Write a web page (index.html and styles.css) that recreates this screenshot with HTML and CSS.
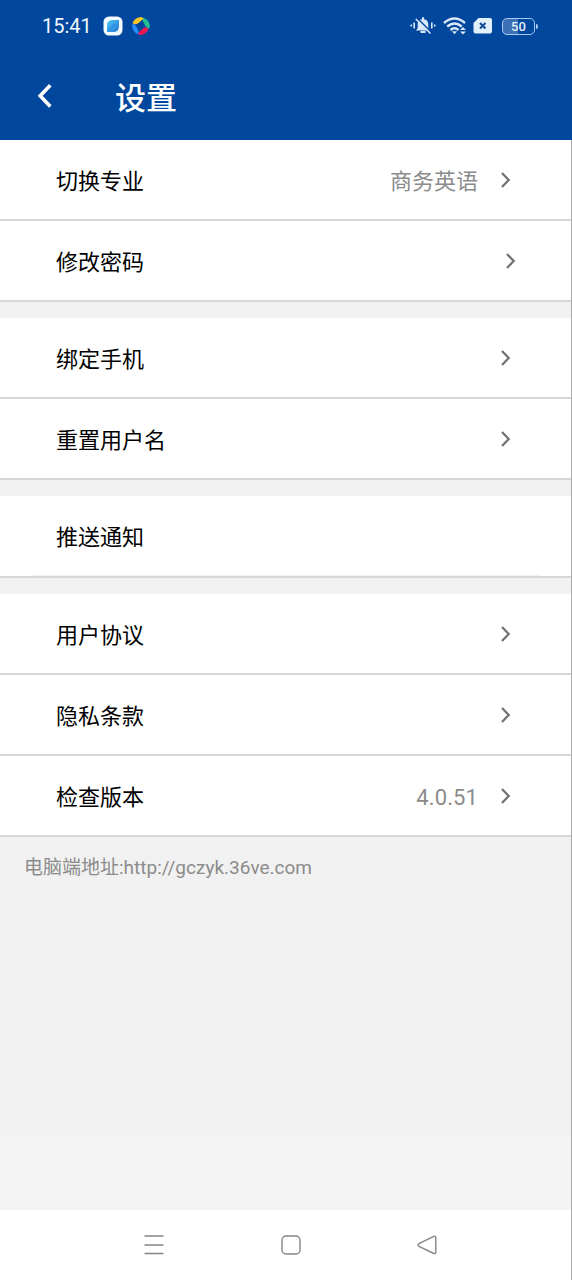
FILE: index.html
```
<!DOCTYPE html>
<html lang="zh-CN">
<head>
<meta charset="utf-8">
<title>设置</title>
<link rel="stylesheet" href="styles.css">
</head>
<body>
<div class="screen">
  <header class="header">
    <div class="status">
      <span class="time">15:41</span>
      <svg class="app-icon" width="20" height="20" viewBox="0 0 20 20">
        <defs><linearGradient id="leaf" x1="0" y1="0" x2="1" y2="1"><stop offset="0" stop-color="#4ccbf5"/><stop offset="1" stop-color="#2472d6"/></linearGradient></defs>
        <rect x="0.5" y="0.5" width="19" height="19" rx="5.5" fill="#f4fbff"/>
        <path d="M4 9.5Q4 4 10 4H16V10Q16 16 10 16H4Z" fill="url(#leaf)"/>
        <path d="M5 15L12 8" stroke="#1e83df" stroke-width="1"/>
      </svg>
      <svg class="app-icon swirl" width="20" height="20" viewBox="0 0 20 20">
        <path d="M1.5 7Q4 1 10.5 1L13 2.5L7.5 7Q4 9.5 1.5 7Z" fill="#f9c52b"/>
        <path d="M12 2Q18.5 3 19 11L17 13Q14 10 12 5.5Z" fill="#20bf92"/>
        <path d="M17.5 13Q15 19 8 19L7 17L12 12.5Q15 10 17.5 13Z" fill="#ef174f"/>
        <path d="M1 8.5L3.5 8Q6 11 7.5 15V18.5Q1 16 1 8.5Z" fill="#268cff"/>
      </svg>
      <div class="indicators">
        <svg width="26" height="20" viewBox="0 0 26 20" fill="none" stroke="#d9e8fa">
          <path d="M6 14.5L7.7 12V8Q8 3.5 13 3Q18 3.5 18.3 8V12L20 14.5Z" fill="#d9e8fa" stroke="none"/>
          <path d="M13 1.2V4M10.5 16H15.5" stroke-width="2"/>
          <path d="M6.5 1.5L21.5 16.5" stroke="#00479d" stroke-width="1.6"/>
          <path d="M5.8 3L20.5 17.5" stroke-width="1.6"/>
          <path d="M4.2 6.5V12.5M1.3 8.5V10.5M21.8 6.5V12.5M24.7 8.5V10.5" stroke-width="1.6"/>
        </svg>
        <svg width="24" height="20" viewBox="0 0 24 20" fill="none" stroke="#d9e8fa" stroke-width="2.4">
          <path d="M1 7Q11.5-2 22 7M4.2 10.5Q11.5 4.5 18.8 10.5M7.5 14Q11.5 10.5 15.5 14"/>
          <path d="M9 15.2H14L11.5 18.3Z" fill="#d9e8fa" stroke="none"/>
          <path d="M17 14L20 11L23 14ZM17 15.5H23L20 18.4Z" fill="#d9e8fa" stroke="none"/>
        </svg>
        <svg class="sim" width="20" height="18" viewBox="0 0 20 18">
          <path d="M5.5 1H17Q19 1 19 3V14.5Q19 16.5 17 16.5H2.5Q.5 16.5 .5 14.5V6Z" fill="#e2f0fc"/>
          <path d="M7 6L12.5 11.5M12.5 6L7 11.5" stroke="#124d94" stroke-width="2.1"/>
        </svg>
        <div class="battery">50</div>
      </div>
    </div>
    <div class="titlebar">
      <svg class="back" width="16" height="26" viewBox="0 0 16 26"><path d="M13.3 2.2L3.2 12.8L13.3 23.4" fill="none" stroke="#fff" stroke-width="3.6"/></svg>
      <h1 class="title">设置</h1>
    </div>
  </header>
  <main class="content">
    <section class="group">
      <div class="row"><span class="label">切换专业</span><span class="value">商务英语</span><svg class="chevron" viewBox="0 0 10 18"><path d="M1 2L7.7 9L1 16"/></svg></div>
      <div class="row wide"><span class="label">修改密码</span><svg class="chevron" viewBox="0 0 10 18"><path d="M1 2L7.7 9L1 16"/></svg></div>
    </section>
    <section class="group">
      <div class="row"><span class="label">绑定手机</span><svg class="chevron" viewBox="0 0 10 18"><path d="M1 2L7.7 9L1 16"/></svg></div>
      <div class="row"><span class="label">重置用户名</span><svg class="chevron" viewBox="0 0 10 18"><path d="M1 2L7.7 9L1 16"/></svg></div>
    </section>
    <section class="group">
      <div class="row push"><span class="label">推送通知</span></div>
    </section>
    <section class="group">
      <div class="row"><span class="label">用户协议</span><svg class="chevron" viewBox="0 0 10 18"><path d="M1 2L7.7 9L1 16"/></svg></div>
      <div class="row"><span class="label">隐私条款</span><svg class="chevron" viewBox="0 0 10 18"><path d="M1 2L7.7 9L1 16"/></svg></div>
      <div class="row"><span class="label">检查版本</span><span class="value version">4.0.51</span><svg class="chevron" viewBox="0 0 10 18"><path d="M1 2L7.7 9L1 16"/></svg></div>
    </section>
    <p class="address">电脑端地址:http://gczyk.36ve.com</p>
  </main>
  <div class="base"></div>
  <nav class="nav">
    <svg width="22" height="22" viewBox="0 0 22 22"><path d="M1.5 2H20.5M1.5 11H20.5M1.5 19.5H20.5"/></svg>
    <svg width="22" height="22" viewBox="0 0 22 22"><rect x="2" y="2" width="18" height="18" rx="4"/></svg>
    <svg width="22" height="22" viewBox="0 0 22 22"><path d="M17.8 2.3L3 9.7Q1 11 3 12.3L17.8 19.5Q19.8 20.2 19.8 18V3.8Q19.8 1.5 17.8 2.3Z"/></svg>
  </nav>
</div>
</body>
</html>
```
FILE: styles.css
```
* {
  box-sizing: border-box;
}

body {
  margin: 0;
  font-family: Roboto, "Noto Sans CJK SC", sans-serif;
}

.screen {
  position: relative;
  display: flex;
  flex-direction: column;
  width: 572px;
  height: 1280px;
  background: #fff;
}

/* hairline along the right side of the screen */
.screen::after {
  content: "";
  position: absolute;
  top: 140px;
  right: 0;
  bottom: 0;
  width: 1px;
  background: #adadad;
}

.header {
  height: 140px;
  background: #00479d;
  color: #fff;
}

.status {
  display: flex;
  align-items: center;
  height: 52px;
  padding: 0 34px 0 42px;
}

.time {
  width: 61px;
  font-family: Roboto, sans-serif;
  font-size: 20px;
  color: #f2f8ff;
}

.swirl {
  margin-left: 8px;
}

.indicators {
  display: flex;
  align-items: center;
  margin-left: auto;
}

.indicators svg:nth-child(2) {
  margin-left: 7px;
}

.sim {
  margin: 0 9px 0 6px;
}

.battery {
  position: relative;
  width: 33px;
  height: 17px;
  margin-right: 3px;
  border: 1.5px solid #a9c8ef;
  border-radius: 5px;
  background: linear-gradient(90deg, #3d70b4 50%, transparent 50%);
  color: #e4effc;
  font-size: 13px;
  font-weight: 500;
  line-height: 15px;
  text-align: center;
}

.battery::after {
  content: "";
  position: absolute;
  top: 5px;
  right: -4px;
  width: 2px;
  height: 5px;
  border-radius: 0 2px 2px 0;
  background: #a9c8ef;
}

.titlebar {
  display: flex;
  align-items: center;
  height: 88px;
  padding: 0 36px 0 37px;
}

.back {
  margin-right: 62px;
}

.title {
  margin: 0;
  padding-top: 5px;
  font-size: 31px;
  font-weight: 500;
  line-height: 83px;
}

.content {
  height: 997px;
  background: #f1f1f1;
}

.group {
  margin-bottom: 16px;
}

.row {
  display: flex;
  align-items: center;
  height: 81px;
  padding: 1px 61px 0 56px;
  border-bottom: 2px solid #d6d6d6;
  background: #fff;
}

.row.wide {
  padding-right: 56px;
}

.row.push {
  height: 82px;
  background: linear-gradient(#f3f3f3, #f3f3f3) 32px 100% / 508px 1px no-repeat padding-box #fff;
}

.label {
  margin-right: auto;
  padding-top: 3px;
  color: #000;
  font-size: 22px;
  line-height: 32px;
}

.value {
  margin-right: 23px;
  padding-top: 3px;
  color: #8b8b8b;
  font-size: 22px;
  line-height: 32px;
}

.version {
  letter-spacing: 0.1px;
}

.chevron {
  width: 10px;
  height: 18px;
  fill: none;
  stroke: #737373;
  stroke-width: 2.3;
}

.address {
  margin: 0;
  padding: 0 0 0 24px;
  color: #8b8b8b;
  font-size: 19px;
  line-height: 29px;
}

.base {
  height: 73px;
  background: #f4f4f4;
}

.nav {
  display: flex;
  align-items: center;
  justify-content: space-between;
  height: 70px;
  padding: 0 134px 0 143px;
  fill: none;
  stroke: #858585;
  stroke-width: 1.4;
}
```
